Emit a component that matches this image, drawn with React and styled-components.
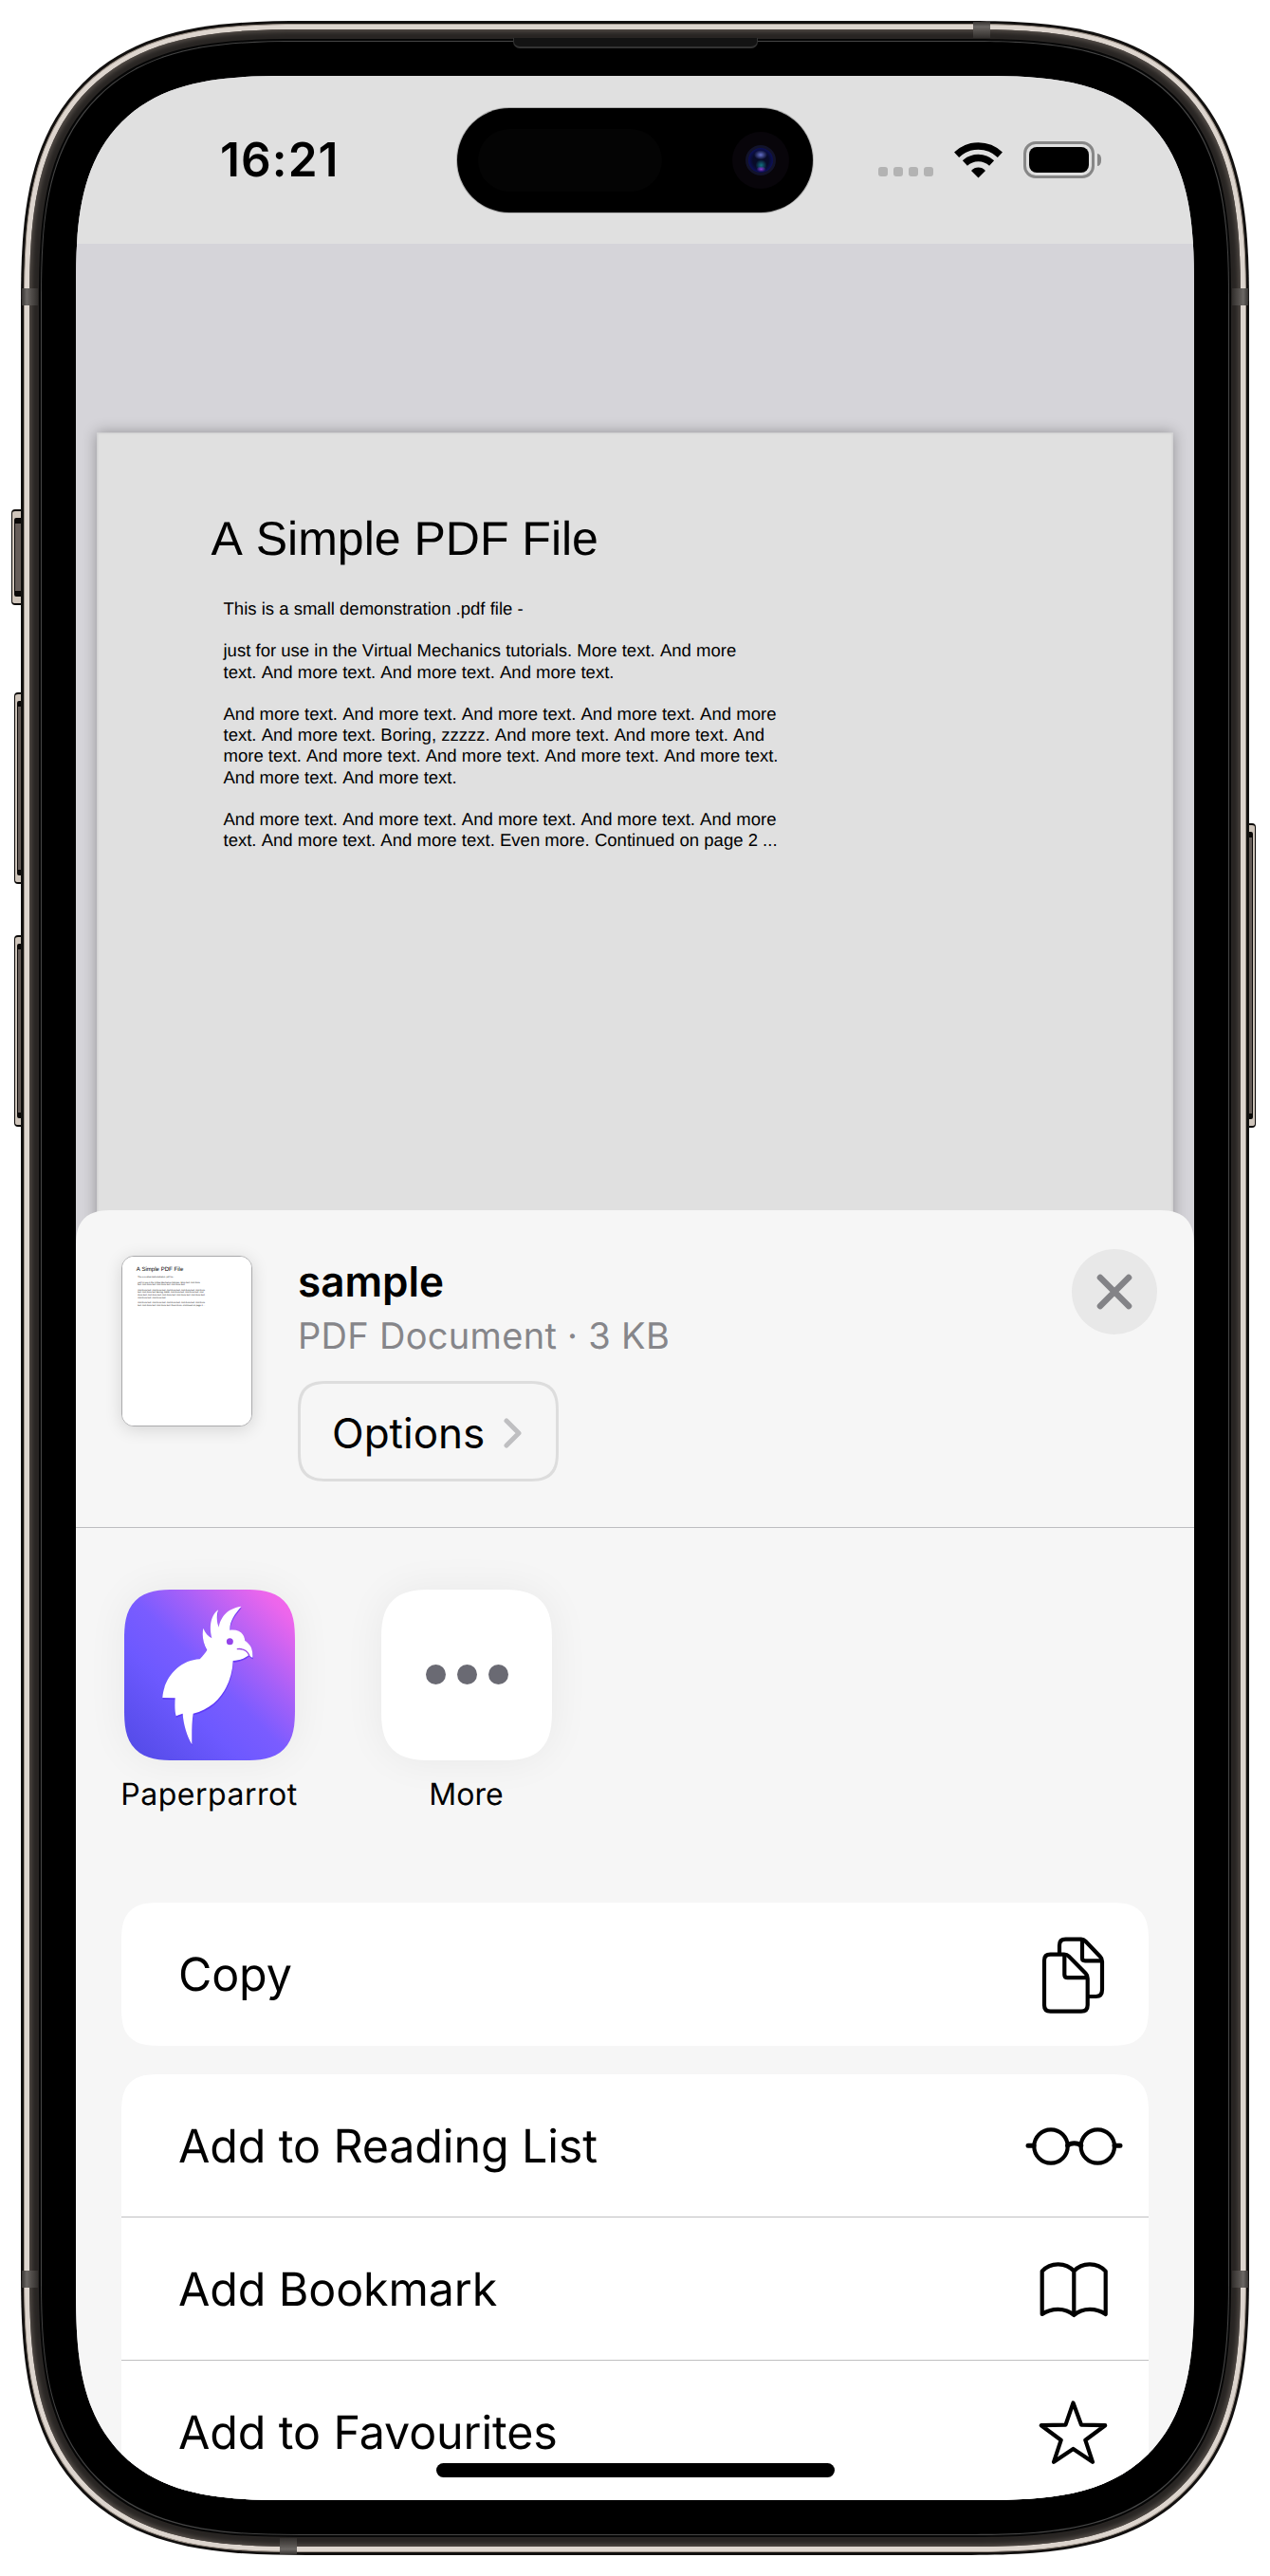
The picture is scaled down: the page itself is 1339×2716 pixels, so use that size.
import React from 'react';
import styled, { createGlobalStyle, css } from 'styled-components';

const GlobalStyle = createGlobalStyle`
  * { box-sizing: border-box; }
  html, body { margin: 0; background: #fff; }
  body {
    font-family: Inter, "Noto Sans", sans-serif;
    color: #000;
    text-rendering: geometricPrecision;
  }
`;

/* continuous corner: a superellipse that starts earlier than the circular radius */
const smooth = (r) => css`
  border-radius: ${Math.round(r * 1.35)}px;
  corner-shape: superellipse(1.5);
`;

/* ---------- device ---------- */

const Stage = styled.main`
  position: relative;
  width: 1339px;
  height: 2716px;
  padding: 22px;
  background: #fff;
  overflow: hidden;
`;

const Shell = styled.div`
  position: relative;
  display: flex;
  height: 2672px;
  padding: 3px;
  background: #12100f;
  ${smooth(223)}
`;

const Rim = styled.div`
  flex: 1;
  display: flex;
  border: 1px solid #a0958b;
  padding: 5px;
  background: #ddd5ce;
  ${smooth(220)}
`;

const Band = styled.div`
  flex: 1;
  display: flex;
  padding: 10px;
  background: #282523;
  box-shadow: inset 0 0 5px 2px #57504b;
  ${smooth(214)}
`;

const Gasket = styled.div`
  flex: 1;
  display: flex;
  padding: 2px;
  background: #060606;
  ${smooth(204)}
`;

const Glass = styled.div`
  flex: 1;
  display: flex;
  border: 1px solid #454545;
  padding: 36px;
  background: #000;
  ${smooth(202)}
`;

const Screen = styled.div`
  flex: 1;
  position: relative;
  display: flex;
  flex-direction: column;
  overflow: hidden;
  background: #d5d4d9;
  ${smooth(165)}
`;

const SideKey = styled.div`
  position: absolute;
  top: ${(p) => p.$top}px;
  ${(p) => p.$side}: ${(p) => p.$offset}px;
  width: ${(p) => 25 - p.$offset}px;
  height: ${(p) => p.$height}px;
  border: 1px solid #0c0a09;
  border-width: 2px 1px;
  border-radius: ${(p) => (p.$side === 'left' ? '4px 0 0 4px' : '0 4px 4px 0')};
  background: #cfc5bb;

  &::after {
    content: '';
    position: absolute;
    inset: 7px ${(p) => (p.$side === 'left' ? '0 7px 2px' : '2px 7px 0')};
    border: solid #0a0807;
    border-width: 6px 1px;
    border-radius: 2px;
    background: #665d59;
  }
`;

const Seam = styled.div`
  position: absolute;
  top: ${(p) => p.$top}px;
  left: ${(p) => p.$left}px;
  width: ${(p) => (p.$flat ? 18 : 17)}px;
  height: ${(p) => (p.$flat ? 17 : 18)}px;
  background: linear-gradient(${(p) => p.$dir}, #353230, #6c6865 30%, #514d4a 60%, #322f2d);
`;

const Earpiece = styled.div`
  position: absolute;
  top: 40px;
  left: 541px;
  width: 258px;
  height: 11px;
  border: solid #333;
  border-width: 0 1px 2px;
  border-radius: 0 0 7px 7px;
  background: #131313;
`;

/* ---------- status bar ---------- */

const StatusBar = styled.header`
  flex: none;
  display: grid;
  grid-template-columns: 402px 375px 402px;
  align-items: center;
  height: 177px;
  background: #e0e0e0;
`;

const Clock = styled.time`
  padding: 0 0 1px 152px;
  font-size: 49.5px;
  font-weight: 600;
  line-height: 60px;
  letter-spacing: 1.1px;
`;

const Island = styled.div`
  display: flex;
  align-items: center;
  justify-content: space-between;
  height: 110px;
  margin-top: 1px;
  padding: 0 25px 0 22px;
  border-radius: 55px;
  background: #000;
  box-shadow: 0 0 0 1px rgba(0, 0, 0, 0.22);
`;

const Sensor = styled.div`
  width: 194px;
  height: 66px;
  border-radius: 33px;
  background: #040404;
`;

const Lens = styled.div`
  display: grid;
  place-items: center;
  width: 60px;
  height: 60px;
  border-radius: 50%;
  background: #08050a;
`;

const Pupil = styled.div`
  width: 32px;
  height: 32px;
  border: 3px solid #12132a;
  border-radius: 50%;
  background:
    radial-gradient(ellipse 7px 5px at 50% 28%, #6470cc, transparent),
    radial-gradient(ellipse 5px 3px at 52% 86%, #8a34d8, transparent),
    radial-gradient(ellipse 6px 6px at 52% 70%, #127080, transparent),
    radial-gradient(circle, #080b28 45%, #0c1058 70%);
`;

const StatusIcons = styled.div`
  display: flex;
  align-items: center;
  height: 39px;
  padding-left: 69px;
`;

const Signal = styled.div`
  display: flex;
  gap: 6px;
  align-self: flex-end;
  margin: 0 22px 2px 0;
`;

const SignalDot = styled.i`
  width: 10px;
  height: 10px;
  border-radius: 3px;
  background: #b3b3b3;
`;

const WifiSvg = styled.svg`
  width: 51px;
  height: 38px;
  margin-right: 22px;
`;

const Battery = styled.div`
  display: flex;
  width: 75px;
  height: 39px;
  padding: 3px;
  border: 3px solid #878787;
  border-radius: 13px;
`;

const Charge = styled.div`
  flex: 1;
  border-radius: 8px;
  background: #000;
`;

const BatteryTip = styled.div`
  width: 4px;
  height: 13px;
  margin-left: 3px;
  border-radius: 0 5px 5px 0 / 0 6.5px 6.5px 0;
  background: #868686;
`;

/* ---------- document ---------- */

const Viewer = styled.section`
  flex: none;
  height: 1067px;
  padding: 199px 22px 0 22px;
  overflow: hidden;
  background: #d5d4d9;
`;

const u = (n) => (p) => `${(n * p.$scale).toFixed(3)}px`;

const Paper = styled.article`
  height: 100%;
  padding: ${u(87)} 0 0 ${u(120.5)};
  overflow: hidden;
  font-family: "Liberation Sans", Arial, sans-serif;
  font-kerning: none;
  white-space: nowrap;
  background: ${(p) => p.$paper};
  box-shadow: ${(p) => p.$shadow};
`;

const PaperTitle = styled.h1`
  margin: 0;
  font-size: ${u(50)};
  font-weight: 400;
  line-height: ${u(50)};
`;

const PaperBody = styled.div`
  margin: ${u(38)} 0 0 ${u(13)};
  font-size: ${u(18.54)};
  line-height: ${u(22.2)};
`;

const Paragraph = styled.p`
  margin: 0 0 ${u(22.2)};
`;

const PARAGRAPHS = [
  ['This is a small demonstration .pdf file -'],
  [
    'just for use in the Virtual Mechanics tutorials. More text. And more',
    'text. And more text. And more text. And more text.',
  ],
  [
    'And more text. And more text. And more text. And more text. And more',
    'text. And more text. Boring, zzzzz. And more text. And more text. And',
    'more text. And more text. And more text. And more text. And more text.',
    'And more text. And more text.',
  ],
  [
    'And more text. And more text. And more text. And more text. And more',
    'text. And more text. And more text. Even more. Continued on page 2 ...',
  ],
];

function PdfPage({ scale = 1, paper, shadow }) {
  return (
    <Paper $scale={scale} $paper={paper} $shadow={shadow}>
      <PaperTitle $scale={scale}>A Simple PDF File</PaperTitle>
      <PaperBody $scale={scale}>
        {PARAGRAPHS.map((lines, i) => (
          <Paragraph key={i} $scale={scale}>
            {lines.map((line, j) => (
              <React.Fragment key={j}>
                {j > 0 && <br />}
                {line}
              </React.Fragment>
            ))}
          </Paragraph>
        ))}
      </PaperBody>
    </Paper>
  );
}

/* ---------- share sheet ---------- */

const Sheet = styled.section`
  position: relative;
  flex: none;
  display: flex;
  flex-direction: column;
  height: 1408px;
  margin-top: -48px;
  background: #f6f6f6;
  border-radius: 40px 40px 0 0;
  corner-shape: superellipse(1.5);
`;

const SheetHeader = styled.header`
  flex: none;
  display: flex;
  align-items: flex-start;
  height: 335px;
  padding: 0 39px 0 48px;
  border-bottom: 1px solid #bdbdc0;
`;

const Thumbnail = styled.div`
  flex: none;
  width: 138px;
  height: 180px;
  margin-top: 48px;
  overflow: hidden;
  border: 1px solid #aaaaac;
  border-radius: 13px;
  background: #fff;
  box-shadow: 0 3px 18px rgba(0, 0, 0, 0.14);
`;

const FileInfo = styled.div`
  flex: 1;
  display: flex;
  flex-direction: column;
  align-items: flex-start;
  padding: 47px 0 0 48px;
`;

const FileName = styled.h2`
  margin: 0 0 5px;
  font-size: 44px;
  font-weight: 600;
  line-height: 56px;
`;

const FileMeta = styled.p`
  margin: 0 0 22px;
  color: #86868a;
  font-size: 38px;
  line-height: 50px;
  letter-spacing: 0.3px;
`;

const OptionsButton = styled.button`
  display: flex;
  align-items: center;
  gap: 20px;
  width: 275px;
  height: 106px;
  padding: 4px 0 0 33px;
  border: 3px solid #dddddd;
  background: transparent;
  color: #000;
  font: 400 44px/56px Inter, sans-serif;
  ${smooth(24)}
`;

const ChevronSvg = styled.svg`
  width: 20px;
  height: 34px;
`;

const CloseButton = styled.button`
  display: grid;
  place-items: center;
  width: 90px;
  height: 90px;
  margin-top: 41px;
  padding: 0;
  border: 0;
  border-radius: 50%;
  background: #e8e8e8;
`;

const Apps = styled.div`
  flex: none;
  display: flex;
  gap: 91px;
  height: 395px;
  padding: 65px 0 0 51px;
`;

const AppItem = styled.div`
  display: flex;
  flex-direction: column;
  align-items: center;
  width: 180px;
`;

const AppTile = styled.div`
  display: flex;
  align-items: center;
  justify-content: center;
  gap: 12px;
  width: 180px;
  height: 180px;
  background: ${(p) => p.$fill};
  box-shadow: 0 0 44px rgba(0, 0, 0, 0.06);
  ${smooth(40)}
`;

const AppLabel = styled.span`
  margin: 16px 1px 0 0;
  font-size: 32px;
  line-height: 40px;
  letter-spacing: ${(p) => p.$tracking}px;
  white-space: nowrap;
`;

const Dot = styled.i`
  width: 21px;
  height: 21px;
  margin-bottom: 1px;
  border-radius: 50%;
  background: #6a6a73;
`;

const Actions = styled.div`
  display: flex;
  flex-direction: column;
  gap: 30px;
  padding: 0 48px;
`;

const ActionGroup = styled.div`
  overflow: hidden;
  background: #fff;
  ${smooth(30)}
`;

const ActionRow = styled.div`
  display: flex;
  align-items: center;
  justify-content: space-between;
  height: 151px;
  padding: 0 24px 0 60px;
  border-bottom: 1px solid ${(p) => (p.$last ? 'transparent' : '#bfbfc1')};
`;

const ActionLabel = styled.span`
  padding-top: 2px;
  font-size: 48.4px;
  line-height: 60px;
  letter-spacing: -0.12px;
`;

const ActionSvg = styled.svg`
  width: 110px;
  height: 90px;
  fill: none;
  stroke: #000;
  stroke-width: 4.2;
  stroke-linecap: round;
  stroke-linejoin: round;
`;

const HomeIndicator = styled.div`
  position: absolute;
  bottom: 24px;
  left: 380px;
  width: 420px;
  height: 15px;
  border-radius: 8px;
  background: #000;
`;

/* ---------- drawings ---------- */

const BIRD =
  'M463 161 C441 188 426 208 427 236 C455 232 473 246 475 270 C489 279 501 293 499 323 ' +
  'C496 323 492 319 488 314 C474 326 456 332 437 333 C434 410 390 482 311 500 ' +
  'C306 530 307 566 307 598 C291 570 280 534 278 500 C270 503 263 505 257 508 ' +
  'C252 490 253 470 254 451 L214 450 C218 388 266 331 332 328 C342 317 350 308 355 299 ' +
  'C341 276 339 250 343 230 C349 245 358 256 370 262 C361 230 365 191 390 172 ' +
  'C384 194 386 212 392 227 C397 200 414 168 463 161 Z';

const ParrotSvg = () => (
  <svg width="180" height="180" viewBox="93 108 540 540">
    <path d={BIRD} fill="#5a30f5" opacity="0.75" transform="translate(1 5)" />
    <path d={BIRD} fill="#fff" />
    <path d="M451 296 C468 294 480 299 488 315" fill="none" stroke="#9a45e4" strokeWidth="4" strokeLinecap="round" />
    <circle cx="427" cy="272" r="10.5" fill="#9443ea" />
  </svg>
);

const Wifi = () => (
  <WifiSvg viewBox="0 0 51 38">
    <g fill="none" stroke="#000" strokeWidth="7.4">
      <path d="M2.6 13.2 C15.5 0.9 35.5 0.9 48.4 13.2" />
      <path d="M11.4 22 C19.4 14.6 31.6 14.6 39.6 22" />
    </g>
    <path d="M25.5 37.5 L18 29.9 C22 25.4 29 25.4 33 29.9 Z" />
  </WifiSvg>
);

const ACTION_ICONS = {
  copy: (
    <>
      <path d="M40 24 V15 Q40 8.7 46.5 8.7 H63 Q65.5 8.7 67.5 10.7 L83 27 Q85 29 85 32 V62 Q85 69 78.5 69 H71" />
      <path d="M64 10 V28.5 Q64 31.3 67 31.3 H84" />
      <path d="M30.5 24.7 H45 Q48 24.7 50 26.7 L67.5 44.5 Q69.7 46.7 69.7 50 V78 Q69.7 84.7 63 84.7 H30.5 Q24 84.7 24 78 V31 Q24 24.7 30.5 24.7 Z" />
      <path d="M45.3 26 V46 Q45.3 49.2 48.5 49.2 H69" />
    </>
  ),
  glasses: (
    <>
      <circle cx="31" cy="46" r="17.7" />
      <circle cx="80.3" cy="46" r="17.7" />
      <path d="M48.5 45.2 C52 42 59.3 42 62.8 45.2 M7 45.2 H13 M98 45.2 H104" strokeWidth="5" />
    </>
  ),
  book: (
    <path d="M55.3 26.5 C47 17.5 31 16.5 21.7 26.7 V72 C31 65.5 46 64.5 55.3 73 C64.5 64.5 79.5 65.5 88.7 72 V26.7 C79.5 16.5 63.5 17.5 55.3 26.5 V73" />
  ),
  star: (
    <path d="M54.5 14.5 L63 37.6 L88.2 38.2 L67.3 53.7 L75 76.8 L54.5 63 L34 76.8 L41.7 53.7 L20.8 38.2 L46.5 37.6 Z" />
  ),
};

function Action({ label, icon, last }) {
  return (
    <ActionRow $last={last}>
      <ActionLabel>{label}</ActionLabel>
      <ActionSvg viewBox="0 0 110 90">{ACTION_ICONS[icon]}</ActionSvg>
    </ActionRow>
  );
}

const PARROT_FILL =
  'linear-gradient(45deg, #5049e4 0%, #6d59ff 34%, #7a5cff 50%, #a560f8 66%, #ec66ec 90%, #f868e8 100%)';

const KEYS = [
  { side: 'left', offset: 12, top: 537, height: 101 },
  { side: 'left', offset: 15, top: 730, height: 202 },
  { side: 'left', offset: 15, top: 986, height: 202 },
  { side: 'right', offset: 15, top: 868, height: 321 },
];

const SEAMS = [
  { top: 304, left: 23, dir: 'to right' },
  { top: 304, left: 1299, dir: 'to left' },
  { top: 2394, left: 23, dir: 'to right' },
  { top: 2394, left: 1299, dir: 'to left' },
  { top: 23, left: 1026, flat: true, dir: 'to bottom' },
  { top: 2676, left: 295, flat: true, dir: 'to top' },
];

export default function App() {
  return (
    <>
      <GlobalStyle />
      <Stage>
        {KEYS.map((k) => (
          <SideKey key={k.side + k.top} $side={k.side} $offset={k.offset} $top={k.top} $height={k.height} />
        ))}
        <Shell>
          <Rim>
            <Band>
              <Gasket>
                <Glass>
                  <Screen>
                    <StatusBar>
                      <Clock>16:21</Clock>
                      <Island>
                        <Sensor />
                        <Lens>
                          <Pupil />
                        </Lens>
                      </Island>
                      <StatusIcons>
                        <Signal>
                          <SignalDot />
                          <SignalDot />
                          <SignalDot />
                          <SignalDot />
                        </Signal>
                        <Wifi />
                        <Battery>
                          <Charge />
                        </Battery>
                        <BatteryTip />
                      </StatusIcons>
                    </StatusBar>

                    <Viewer>
                      <PdfPage
                        paper="#e0e0e0"
                        shadow="inset 0 0 0 1.5px #d3d3d4, 0 0 14px rgba(0, 0, 0, 0.32)"
                      />
                    </Viewer>

                    <Sheet>
                      <SheetHeader>
                        <Thumbnail>
                          <PdfPage scale={0.1216} paper="#fff" shadow="none" />
                        </Thumbnail>
                        <FileInfo>
                          <FileName>sample</FileName>
                          <FileMeta>PDF Document · 3 KB</FileMeta>
                          <OptionsButton>
                            Options
                            <ChevronSvg viewBox="0 0 20 34">
                              <path
                                d="M3 4 L16 17 L3 30"
                                fill="none"
                                stroke="#bfbfc1"
                                strokeWidth="5"
                                strokeLinecap="round"
                                strokeLinejoin="round"
                              />
                            </ChevronSvg>
                          </OptionsButton>
                        </FileInfo>
                        <CloseButton aria-label="Close">
                          <svg width="38" height="38" viewBox="0 0 38 38">
                            <path d="M4 4 L34 34 M34 4 L4 34" stroke="#838387" strokeWidth="6.6" strokeLinecap="round" />
                          </svg>
                        </CloseButton>
                      </SheetHeader>

                      <Apps>
                        <AppItem>
                          <AppTile $fill={PARROT_FILL}>
                            <ParrotSvg />
                          </AppTile>
                          <AppLabel $tracking={0.5}>Paperparrot</AppLabel>
                        </AppItem>
                        <AppItem>
                          <AppTile $fill="#fff">
                            <Dot />
                            <Dot />
                            <Dot />
                          </AppTile>
                          <AppLabel $tracking={0.1}>More</AppLabel>
                        </AppItem>
                      </Apps>

                      <Actions>
                        <ActionGroup>
                          <Action label="Copy" icon="copy" last />
                        </ActionGroup>
                        <ActionGroup>
                          <Action label="Add to Reading List" icon="glasses" />
                          <Action label="Add Bookmark" icon="book" />
                          <Action label="Add to Favourites" icon="star" last />
                        </ActionGroup>
                      </Actions>
                    </Sheet>

                    <HomeIndicator />
                  </Screen>
                </Glass>
              </Gasket>
            </Band>
          </Rim>
        </Shell>
        {SEAMS.map((s) => (
          <Seam key={`${s.top}-${s.left}`} $top={s.top} $left={s.left} $flat={s.flat} $dir={s.dir} />
        ))}
        <Earpiece />
      </Stage>
    </>
  );
}
